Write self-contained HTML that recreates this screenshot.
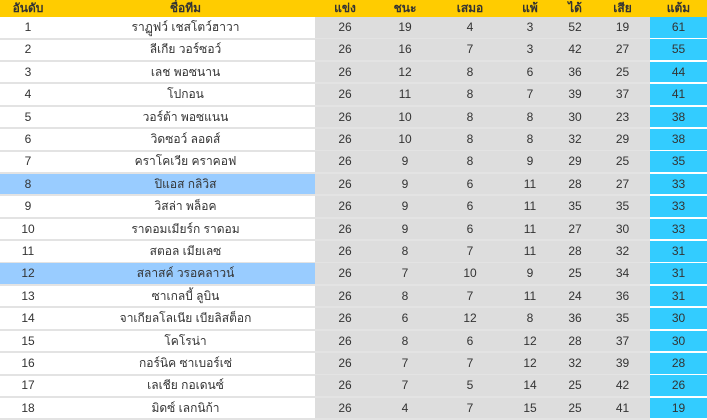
<!DOCTYPE html>
<html><head><meta charset="utf-8"><style>
*{margin:0;padding:0;box-sizing:border-box}
body{width:707px;height:420px;overflow:hidden;background:#fff;font-family:"Liberation Sans","Noto Sans CJK SC",sans-serif;font-size:12px;color:#333}
.r{position:absolute;left:0;width:707px;height:22.5px;display:flex;border-bottom:2px solid #e3e3e3}
.h{top:0;height:17px;background:#fc0;border:none;font-weight:bold;color:#333}
.r div{text-align:center;line-height:20px}
.h div{line-height:17px}
.c0{width:56px}.c1{width:259px}
.c2{width:60px;background:#ddd}.c3{width:60px;background:#ddd}.c4{width:70px;background:#ddd}.c5{width:50px;background:#ddd}.c6{width:40px;background:#ddd}.c7{width:55px;background:#ddd}
.c8{width:57px;background:#3cf;border-bottom:2px solid #fff;margin-bottom:-2px}
.h div{background:none!important;border:none!important}
.hl .c0,.hl .c1{background:#9cf}
</style></head><body>
<div class="r h"><div class="c0">อันดับ</div><div class="c1">ชื่อทีม</div><div class="c2">แข่ง</div><div class="c3">ชนะ</div><div class="c4">เสมอ</div><div class="c5">แพ้</div><div class="c6">ได้</div><div class="c7">เสีย</div><div class="c8">แต้ม</div></div>
<div id="t"></div>
<script>
var d=[["ราฏูฟว์ เชสโตว์ฮาวา",19,4,3,52,19,61],["ลีเกีย วอร์ซอว์",16,7,3,42,27,55],["เลช พอซนาน",12,8,6,36,25,44],["โปกอน",11,8,7,39,37,41],["วอร์ต้า พอซแนน",10,8,8,30,23,38],["วิดซอว์ ลอดส์",10,8,8,32,29,38],["คราโคเวีย คราคอฟ",9,8,9,29,25,35],["ปิแอส กลิวิส",9,6,11,28,27,33],["วิสล่า พล็อค",9,6,11,35,35,33],["ราดอมเมียร์ก ราดอม",9,6,11,27,30,33],["สตอล เมียเลซ",8,7,11,28,32,31],["สลาสค์ วรอคลาวน์",7,10,9,25,34,31],["ซาเกลบี้ ลูบิน",8,7,11,24,36,31],["จาเกียลโลเนีย เบียลิสต็อก",6,12,8,36,35,30],["โคโรน่า",8,6,12,28,37,30],["กอร์นิค ซาเบอร์เซ่",7,7,12,32,39,28],["เลเชีย กอเดนซ์",7,5,14,25,42,26],["มิดซ์ เลกนิก้า",4,7,15,25,41,19]];
var h="";d.forEach(function(x,i){h+='<div class="r'+(i==7||i==11?' hl':'')+'" style="top:'+(17+i*22.4)+'px"><div class="c0">'+(i+1)+'</div><div class="c1">'+x[0]+'</div><div class="c2">26</div><div class="c3">'+x[1]+'</div><div class="c4">'+x[2]+'</div><div class="c5">'+x[3]+'</div><div class="c6">'+x[4]+'</div><div class="c7">'+x[5]+'</div><div class="c8">'+x[6]+'</div></div>'});
document.getElementById("t").innerHTML=h;
</script>
</body></html>
